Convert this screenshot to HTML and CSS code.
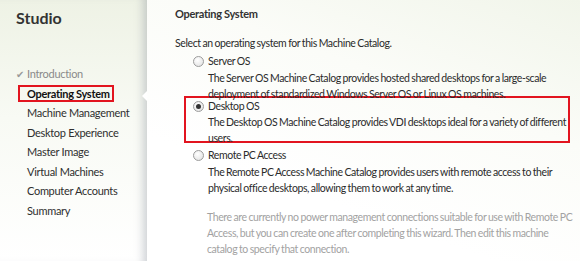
FILE: index.html
```html
<!DOCTYPE html>
<html lang="en">
<head>
    <meta charset="UTF-8">
    <title>Machine Catalog Setup - Studio</title>
    <link rel="stylesheet" href="styles.css">
</head>
<body>
    <div class="wizard">
        <div class="sidebar">
            <p class="studio-title">Studio</p>
            <ul class="steps">
                <li class="step done"><span class="check">&#10004;</span>Introduction</li>
                <li class="step current"><span class="step-box">Operating System</span></li>
                <li class="step">Machine Management</li>
                <li class="step">Desktop Experience</li>
                <li class="step">Master Image</li>
                <li class="step">Virtual Machines</li>
                <li class="step">Computer Accounts</li>
                <li class="step">Summary</li>
            </ul>
            <span class="notch"></span>
        </div>

        <div class="content">
            <p class="page-title">Operating System</p>
            <p class="intro">Select an operating system for this Machine Catalog.</p>

            <div class="option">
                <span class="radio"></span>
                <div class="option-text">
                    <p class="option-name">Server OS</p>
                    <p class="option-desc">The Server OS Machine Catalog provides hosted shared desktops for a large-scale deployment of standardized Windows Server OS or Linux OS machines.</p>
                </div>
            </div>

            <div class="option highlighted">
                <span class="radio checked"></span>
                <div class="option-text">
                    <p class="option-name">Desktop OS</p>
                    <p class="option-desc">The Desktop OS Machine Catalog provides VDI desktops ideal for a variety of different users.</p>
                </div>
            </div>

            <div class="option">
                <span class="radio"></span>
                <div class="option-text">
                    <p class="option-name">Remote PC Access</p>
                    <p class="option-desc">The Remote PC Access Machine Catalog provides users with remote access to their physical office desktops, allowing them to work at any time.</p>
                </div>
            </div>

            <p class="note">There are currently no power management connections suitable for use with Remote PC Access, but you can create one after completing this wizard. Then edit this machine<br>catalog to specify that connection.</p>
        </div>
    </div>
</body>
</html>
```

FILE: styles.css
```css
* { box-sizing: border-box; margin: 0; padding: 0; }
body {
    font-family: Lato, "Open Sans", Arial, sans-serif;
    font-size: 10.5px;
    letter-spacing: -0.3px;
    color: #2b2b2b;
    background: #fff;
    overflow: hidden;
}
.wizard {
    display: flex;
    height: 261px;
}

/* left column with steps */
.sidebar {
    position: relative;
    width: 147px;
    flex-shrink: 0;
    padding: 8px 0 0 16px;
    background: linear-gradient(180deg, #eef2e5 0%, #f8faf4 45%, #ffffff 100%);
    box-shadow: inset -10px 0 8px -6px rgba(120, 130, 140, 0.35);
}
.studio-title {
    font-size: 16px;
    line-height: 20px;
    font-weight: 700;
    letter-spacing: 0;
    color: #333;
    margin-bottom: 36px;
}
.steps {
    list-style: none;
}
.step {
    height: 19.5px;
    line-height: 19.5px;
    padding-left: 11px;
    font-size: 11px;
    color: #2f2f2f;
    white-space: nowrap;
}
.step.done {
    padding-left: 0;
    color: #8a8a8a;
}
.check {
    display: inline-block;
    width: 11px;
    font-size: 10px;
    color: #9a9a9a;
}
.step.current {
    font-weight: 700;
    color: #111;
}
.step-box {
    margin-left: -9px;
    padding: 0 2px 0 7px;
    border: 2px solid #e2141f;
}
.notch {
    position: absolute;
    right: 0;
    top: 91px;
    border-top: 5px solid transparent;
    border-bottom: 5px solid transparent;
    border-right: 5px solid #fff;
}

/* right column */
.content {
    flex: 1;
    padding: 6px 10px 0 28px;
    line-height: 16px;
    letter-spacing: -0.4px;
    word-spacing: -0.5px;
    background: linear-gradient(200deg, #f1f5ea 0%, #fbfcf8 35%, #ffffff 70%);
}
.page-title {
    font-weight: 700;
    font-size: 11px;
    letter-spacing: -0.3px;
    word-spacing: 0;
    color: #333;
    margin-bottom: 13px;
}
.intro {
    margin-bottom: 2px;
}
.option {
    display: flex;
    gap: 4px;
    margin-left: 9px;
    padding-left: 7px;
    border: 2px solid transparent;
    border-width: 0 2px;
}
.option.highlighted {
    height: 47px;
    margin-top: -6px;
    margin-bottom: 4px;
    border-width: 2px;
    border-color: #e2141f;
}
.option-name {
    margin-bottom: 1px;
}
.highlighted .option-name {
    margin-bottom: 0;
}
.radio {
    flex-shrink: 0;
    width: 11px;
    height: 11px;
    margin-top: 3px;
    border-radius: 50%;
    border: 1px solid #9c9c9c;
    background: radial-gradient(circle at 40% 35%, #ffffff 0%, #e8e8e8 70%, #d4d4d4 100%);
    display: flex;
    align-items: center;
    justify-content: center;
}
.radio.checked::after {
    content: "";
    width: 5px;
    height: 5px;
    border-radius: 50%;
    background: #333;
}
.note {
    margin: 13px -6px 0 32px;
    color: #a2a2a2;
}
```
